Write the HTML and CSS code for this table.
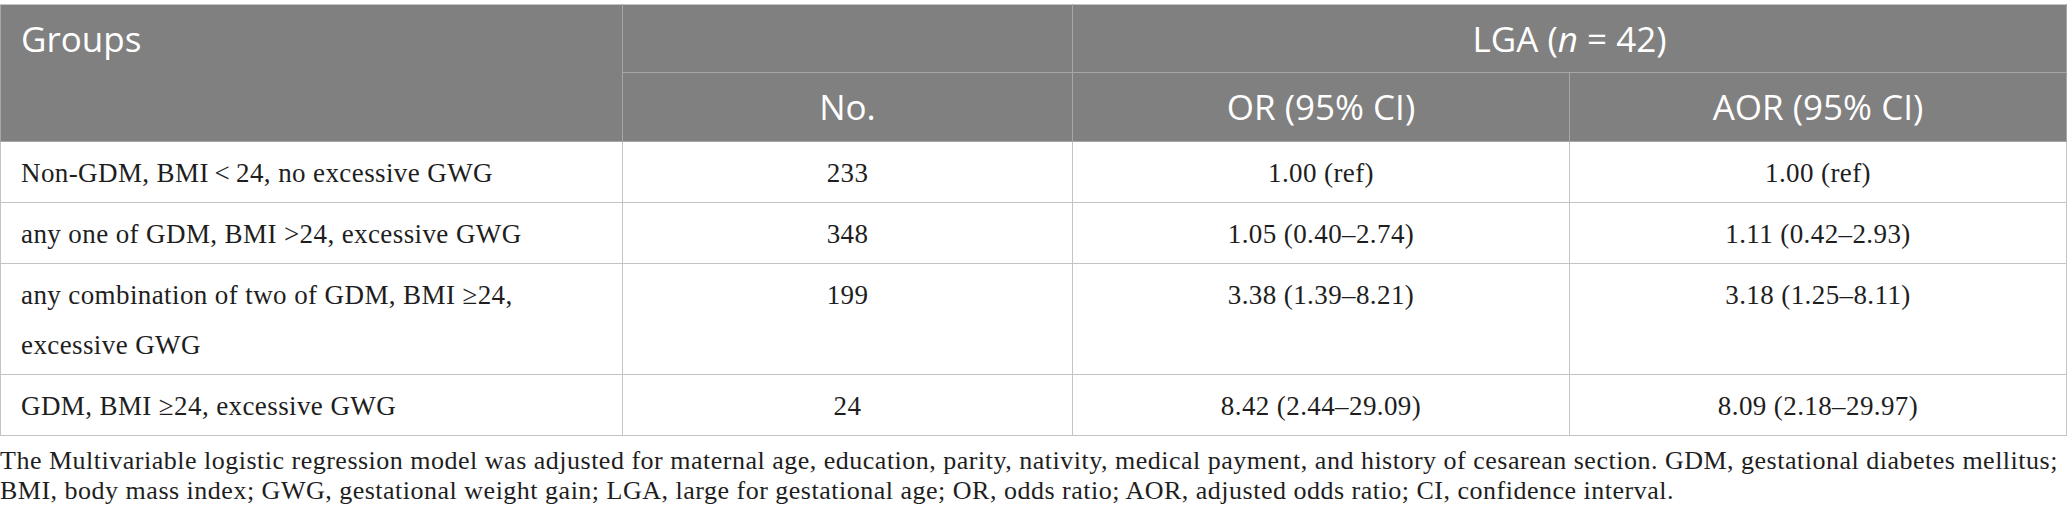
FILE: index.html
```html
<!DOCTYPE html>
<html lang="en">
<head>
    <meta charset="UTF-8">
    <title>LGA odds ratios by risk group</title>
    <link rel="stylesheet" href="styles.css">
</head>
<body>
    <table class="data-table">
        <colgroup>
            <col class="col-group">
            <col class="col-no">
            <col class="col-or">
            <col class="col-aor">
        </colgroup>
        <thead>
            <tr class="head-top">
                <th class="groups" rowspan="2">Groups</th>
                <th></th>
                <th colspan="2">LGA (<i>n</i> = 42)</th>
            </tr>
            <tr class="head-sub">
                <th>No.</th>
                <th>OR (95% CI)</th>
                <th>AOR (95% CI)</th>
            </tr>
        </thead>
        <tbody>
            <tr>
                <td>Non-GDM, BMI&thinsp;&lt;&thinsp;24, no excessive GWG</td>
                <td class="num">233</td>
                <td class="num">1.00 (ref)</td>
                <td class="num">1.00 (ref)</td>
            </tr>
            <tr>
                <td>any one of GDM, BMI &gt;24, excessive GWG</td>
                <td class="num">348</td>
                <td class="num">1.05 (0.40–2.74)</td>
                <td class="num">1.11 (0.42–2.93)</td>
            </tr>
            <tr>
                <td>any combination of two of GDM, BMI ≥24,<br>excessive GWG</td>
                <td class="num">199</td>
                <td class="num">3.38 (1.39–8.21)</td>
                <td class="num">3.18 (1.25–8.11)</td>
            </tr>
            <tr>
                <td>GDM, BMI ≥24, excessive GWG</td>
                <td class="num">24</td>
                <td class="num">8.42 (2.44–29.09)</td>
                <td class="num">8.09 (2.18–29.97)</td>
            </tr>
        </tbody>
    </table>

    <!-- table footnote -->
    <p class="footnote">The Multivariable logistic regression model was adjusted for maternal age, education, parity, nativity, medical payment, and history of cesarean section. GDM, gestational diabetes mellitus; BMI, body mass index; GWG, gestational weight gain; LGA, large for gestational age; OR, odds ratio; AOR, adjusted odds ratio; CI, confidence interval.</p>
</body>
</html>
```

FILE: styles.css
```css
body {
    margin: 0;
    padding: 4px 1px 0 0;
    background-color: white;
    font-family: "Liberation Serif", "Times New Roman", serif;
    color: #1e1e1e;
}
.data-table {
    width: 2066px;
    border-collapse: collapse;
    table-layout: fixed;
}
.col-group {
    width: 622px;
}
.col-no {
    width: 450px;
}
.col-or,
.col-aor {
    width: 497px;
}
th {
    background-color: #7f807f;
    color: white;
    font-family: "Open Sans", sans-serif;
    font-weight: 400;
    font-size: 35px;
    line-height: 48px;
    text-align: center;
    border: 1px solid #a6a6a6;
    padding: 0 20px;
}
.head-top th {
    height: 67px;
}
.head-sub th {
    height: 68px;
}
th.groups {
    text-align: left;
    vertical-align: top;
    padding-top: 10px;
}
.data-table thead tr:first-child th {
    border-top-color: #c4c4c4;
}
td {
    font-size: 27px;
    letter-spacing: 0.4px;
    line-height: 50px;
    padding: 6px 20px 4px 20px;
    vertical-align: top;
    border: 1px solid #c4c4c4;
}
td.num {
    text-align: center;
}
.footnote {
    margin: 10px 0 0 0;
    font-size: 26px;
    letter-spacing: 0.5px;
    line-height: 30px;
}
```
